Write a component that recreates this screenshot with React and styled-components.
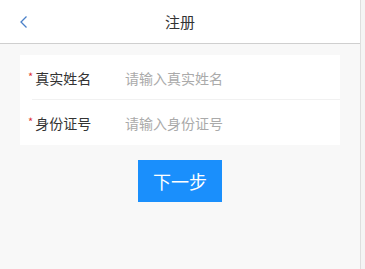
import React from "react";
import styled, { createGlobalStyle } from "styled-components";

const GlobalStyle = createGlobalStyle`
  html, body {
    margin: 0;
    padding: 0;
    background: #f8f8f8;
    font-family: "Noto Sans CJK SC", "Liberation Sans", sans-serif;
  }
`;

const Page = styled.div`
  width: 365px;
  height: 269px;
  display: flex;
  overflow: hidden;
`;

const Main = styled.div`
  width: 360px;
  background: #f8f8f8;
  display: flex;
  flex-direction: column;
`;

const Gutter = styled.div`
  width: 5px;
  background: #f4f4f4;
  border-left: 1px solid #dedede;
  box-sizing: border-box;
`;

const Header = styled.header`
  height: 44px;
  background: #fff;
  border-bottom: 1px solid #cfcfcf;
  box-sizing: border-box;
  display: flex;
  align-items: center;
  justify-content: center;
  position: relative;
`;

const Back = styled.button`
  position: absolute;
  left: 14px;
  top: 12px;
  border: none;
  background: none;
  padding: 0;
  width: 20px;
  height: 20px;
  display: flex;
  align-items: center;
  justify-content: center;
`;

const Title = styled.h1`
  margin: 0;
  font-size: 15px;
  font-weight: 400;
  color: #333;
`;

const Card = styled.div`
  margin: 11px 20px 0;
  background: #fff;
`;

const Row = styled.div`
  height: 45px;
  display: flex;
  align-items: center;
  padding-left: 8px;
  box-sizing: border-box;
  position: relative;
  &::after {
    content: "";
    display: ${(p) => (p.$last ? "none" : "block")};
    position: absolute;
    left: 12px;
    right: 0;
    bottom: 0;
    height: 1px;
    background: #f1f1f1;
  }
`;

const Label = styled.label`
  width: 97px;
  font-size: 14px;
  color: #333;
  display: flex;
  align-items: center;
`;

const Star = styled.span`
  color: #d33;
  font-size: 11px;
  margin-right: 2px;
  margin-top: -3px;
`;

const Input = styled.input`
  border: none;
  outline: none;
  flex: 1;
  font-size: 14px;
  font-family: inherit;
  color: #333;
  padding: 0;
  background: transparent;
  &::placeholder {
    color: #aaa;
  }
`;

const Actions = styled.div`
  display: flex;
  justify-content: center;
  margin-top: 15px;
`;

const NextButton = styled.button`
  width: 84px;
  height: 42px;
  background: #1a8ffc;
  color: #fff;
  border: none;
  font-size: 18px;
  font-family: inherit;
`;

const fields = [
  { label: "真实姓名", placeholder: "请输入真实姓名" },
  { label: "身份证号", placeholder: "请输入身份证号" },
];

export default function App() {
  return (
    <>
      <GlobalStyle />
      <Page>
        <Main>
          <Header>
            <Back aria-label="返回">
              <svg width="10" height="14" viewBox="0 0 10 14">
                <path d="M7.5 1.5 L2 7 L7.5 12.5" fill="none" stroke="#4a80c8" strokeWidth="1.3" />
              </svg>
            </Back>
            <Title>注册</Title>
          </Header>
          <Card>
            {fields.map((f, i) => (
              <Row key={f.label} $last={i === fields.length - 1}>
                <Label>
                  <Star>*</Star>
                  {f.label}
                </Label>
                <Input placeholder={f.placeholder} />
              </Row>
            ))}
          </Card>
          <Actions>
            <NextButton>下一步</NextButton>
          </Actions>
        </Main>
        <Gutter />
      </Page>
    </>
  );
}
